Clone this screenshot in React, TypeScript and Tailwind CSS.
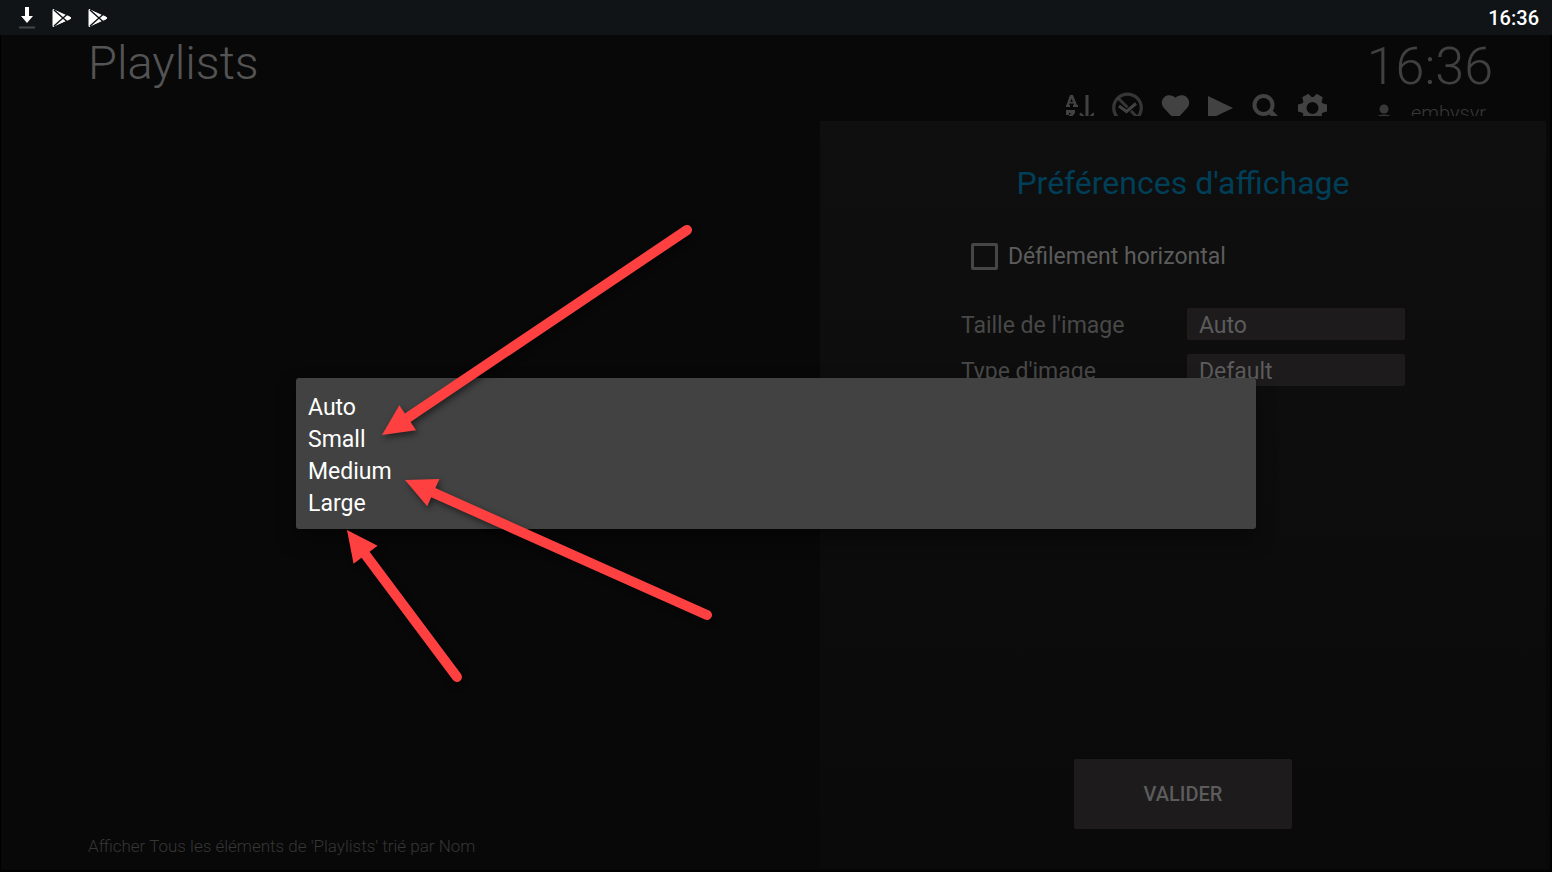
/**
 * App — Playlists screen of the media client with the display preferences
 * panel open and the image size picker on top of it.
 */

import { useState } from 'react'
import type { ReactNode } from 'react'

// ── Data ─────────────────────────────────────────────────────────────────────

const IMAGE_SIZES = ['Auto', 'Small', 'Medium', 'Large']
const IMAGE_TYPES = ['Default', 'Primary', 'Banner', 'Thumb']

// Arrows are drawn in the picker's own coordinates, tip first
const ARROWS = [
  { tip: [86, 57], tail: [391, -148] },
  { tip: [109, 102], tail: [411, 237] },
  { tip: [51, 152], tail: [161, 299] },
]

// ── Icons ────────────────────────────────────────────────────────────────────

function DownloadIcon() {
  return (
    <svg width="18" height="24" viewBox="0 0 18 24" aria-hidden="true">
      <path d="M7 1h4v9h4l-6 7-6-7h4z" fill="#fff" />
      <path d="M1 20.500h16v2H1z" fill="#43474a" />
    </svg>
  )
}

function PlayStoreIcon() {
  return (
    <svg width="20" height="20" viewBox="0 0 20 20" aria-hidden="true">
      <path d="M1 1.500L13 7q6 2 6 3t-6 3L1 18.500z" fill="#fff" stroke="#fff" strokeWidth="1" strokeLinejoin="round" />
      <path d="M2 2l13.500 12M2 18L15.500 6" stroke="#101417" strokeWidth="1.5" fill="none" />
    </svg>
  )
}

function SortIcon() {
  return (
    <svg width="28" height="30" viewBox="0 0 28 30" fill="currentColor" aria-hidden="true">
      <path d="M4 2h3l4 10h1v2H7v-2h1l-.5-1.500H3.500L3 12h1v2H0v-2h.500zM5.500 5.500L4.300 9h2.600z" />
      <path d="M0 17h9v3l-5 6h5v3H0v-3l5-6H3v2H0z" />
      <path d="M19.500 2h3v23h-3z" />
      <path d="M14 20.500l7 6.500 7-6.500" fill="none" stroke="currentColor" strokeWidth="2.500" />
    </svg>
  )
}

function UnwatchedIcon() {
  return (
    <svg width="31" height="32" viewBox="0 0 31 32" fill="none" stroke="currentColor" aria-hidden="true">
      <circle cx="15.500" cy="16" r="13.800" strokeWidth="3.200" opacity="0.8" />
      <path d="M6 6l20 20" strokeWidth="3" opacity="0.8" />
      <path d="M8 14.500l6.500 5L23 12" stroke="#080808" strokeWidth="5" />
      <path d="M7 14l7.500 5.500 9.500-8" strokeWidth="3" />
    </svg>
  )
}

function HeartIcon() {
  return (
    <svg width="29" height="30" viewBox="0 0 30 30" fill="currentColor" aria-hidden="true">
      <path d="M15 4.500C12.500 1.500 6.500.800 3.300 3.800.2 6.800 0 11.500 3 15l12 13 12-13c3-3.500 2.800-8.200-.3-11.200C23.500.800 17.500 1.500 15 4.500z" />
    </svg>
  )
}

function PlayIcon() {
  return (
    <svg width="25" height="26" viewBox="0 0 25 26" fill="currentColor" aria-hidden="true">
      <path d="M0 1l25 12L0 25z" />
    </svg>
  )
}

function SearchIcon() {
  return (
    <svg width="28" height="30" viewBox="-1 -1 28 30" fill="none" stroke="currentColor" aria-hidden="true">
      <circle cx="11.500" cy="11" r="9" strokeWidth="4" />
      <path d="M17 16.500l8.500 8.500" strokeWidth="5" />
    </svg>
  )
}

const GEAR_ANGLES = [0, 60, 120, 180, 240, 300]

function GearIcon() {
  return (
    <svg width="31" height="30" viewBox="-15.500 -15 31 30" fill="currentColor" aria-hidden="true">
      <circle r="8.500" fill="none" stroke="currentColor" strokeWidth="5" />
      {GEAR_ANGLES.map((angle) => (
        <path key={angle} d="M9-5l5.500 1.500v7L9 5z" transform={`rotate(${angle})`} />
      ))}
    </svg>
  )
}

function UserIcon() {
  return (
    <svg width="16" height="18" viewBox="0 0 16 18" fill="currentColor" aria-hidden="true">
      <circle cx="7" cy="5" r="4.500" />
      <path d="M0 16v-2q0-3.500 7-3.500t7 3.500v2z" />
    </svg>
  )
}

// ── Arrow overlay ────────────────────────────────────────────────────────────

function Arrow({ tip, tail }: { tip: number[]; tail: number[] }) {
  const dx = tail[0] - tip[0]
  const dy = tail[1] - tip[1]
  const length = Math.hypot(dx, dy)
  const angle = (Math.atan2(dy, dx) * 180) / Math.PI

  return (
    <g transform={`translate(${tip[0]} ${tip[1]}) rotate(${angle})`}>
      <path d="M0 0L31-15V15z" />
      <path d={`M26 0H${length}`} stroke="#ff4040" strokeWidth="10" strokeLinecap="round" />
    </g>
  )
}

// ── Toolbar ──────────────────────────────────────────────────────────────────

const TOOLS: { label: string; icon: ReactNode }[] = [
  { label: 'Trier', icon: <SortIcon /> },
  { label: 'Non vus', icon: <UnwatchedIcon /> },
  { label: 'Favoris', icon: <HeartIcon /> },
  { label: 'Lecture', icon: <PlayIcon /> },
  { label: 'Rechercher', icon: <SearchIcon /> },
  { label: 'Paramètres', icon: <GearIcon /> },
]

function Header() {
  return (
    <header className="flex h-[81px] items-start overflow-hidden pr-[57px] pl-[87px]">
      <h1 className="flex-1 text-[47px] leading-14 font-light text-[#545454]">Playlists</h1>
      <nav className="mt-[57px] mr-[39px] flex items-center gap-[18px] text-[#424242]">
        {TOOLS.map((tool) => (
          <button key={tool.label} type="button" aria-label={tool.label}>
            {tool.icon}
          </button>
        ))}
      </nav>
      <div className="flex flex-col items-end">
        <span className="text-[52px] leading-[64px] font-light text-[#404040]">16:36</span>
        <span className="flex items-center gap-[18px] pr-[7px] text-[20px] leading-7 font-light text-[#383838]">
          <UserIcon />
          embysvr
        </span>
      </div>
    </header>
  )
}

// ── Preferences panel ────────────────────────────────────────────────────────

interface SelectRowProps {
  id: string
  label: string
  options: string[]
  value: string
  onChange: (value: string) => void
}

function SelectRow({ id, label, options, value, onChange }: SelectRowProps) {
  return (
    <div className="flex items-center justify-between">
      <label htmlFor={id} className="pt-1 text-[#484848]">{label}</label>
      <select
        id={id}
        value={value}
        onChange={(e) => onChange(e.target.value)}
        className="h-8 w-[218px] appearance-none rounded-xs bg-[#1d1b1c] px-3 pt-1 leading-7 text-[#5c5c5c]"
      >
        {options.map((option) => (
          <option key={option}>{option}</option>
        ))}
      </select>
    </div>
  )
}

interface PreferencesProps {
  size: string
  onSizeChange: (size: string) => void
}

function Preferences({ size, onSizeChange }: PreferencesProps) {
  const [horizontal, setHorizontal] = useState(false)
  const [type, setType] = useState('Default')

  return (
    <aside className="flex w-[47%] flex-col items-center bg-linear-to-b from-[#0f0f0f] to-[#0a0a0a] pt-10 pb-[39px]">
      <h2 className="text-[32px] leading-11 text-[#003f58]">Préférences d'affichage</h2>
      <form className="mt-9 flex w-[444px] flex-1 flex-col text-[23px] leading-7" onSubmit={(e) => e.preventDefault()}>
        <label className="mb-[37px] flex items-center gap-[10px] pl-[10px] text-[#5c5c5c]">
          <input
            type="checkbox"
            checked={horizontal}
            onChange={(e) => setHorizontal(e.target.checked)}
            className="size-[27px] appearance-none rounded-xs border-3 border-[#464646] checked:bg-[#464646]"
          />
          <span className="pt-[2px]">Défilement horizontal</span>
        </label>
        <div className="flex flex-col gap-[14px]">
          <SelectRow id="image-size" label="Taille de l'image" options={IMAGE_SIZES} value={size} onChange={onSizeChange} />
          <SelectRow id="image-type" label="Type d'image" options={IMAGE_TYPES} value={type} onChange={setType} />
        </div>
        <button
          type="submit"
          className="mx-auto mt-auto h-[70px] w-[218px] rounded-xs bg-[#1d1b1c] text-[20px] font-medium text-[#5c5c5c]"
        >
          VALIDER
        </button>
      </form>
    </aside>
  )
}

// ── Size picker ──────────────────────────────────────────────────────────────

function SizePicker({ onSelect }: { onSelect: (size: string) => void }) {
  return (
    <div className="absolute inset-0 flex items-center justify-center">
      <div role="dialog" aria-label="Taille de l'image" className="relative w-[960px] max-w-full rounded-[3px] bg-[#424242] pt-[14px] pb-[9px] shadow-[0_10px_20px_rgba(0,0,0,0.4)]">
        <ul className="text-[23px] leading-8 text-white">
          {IMAGE_SIZES.map((size) => (
            <li key={size}>
              <button type="button" className="block w-full px-3 text-left" onClick={() => onSelect(size)}>
                {size}
              </button>
            </li>
          ))}
        </ul>
        <svg
          className="pointer-events-none absolute top-0 left-0 overflow-visible drop-shadow-[2px_3px_3px_rgba(0,0,0,0.5)]"
          width="420"
          height="151"
          fill="#ff4040"
          aria-hidden="true"
        >
          {ARROWS.map((arrow) => (
            <Arrow key={arrow.tip.join()} tip={arrow.tip} tail={arrow.tail} />
          ))}
        </svg>
      </div>
    </div>
  )
}

// ── Page ─────────────────────────────────────────────────────────────────────

export default function App() {
  const [size, setSize] = useState('Auto')

  return (
    <div className="flex min-h-screen flex-col bg-black font-[Roboto,sans-serif]">
      <div className="flex h-[35px] items-center bg-[#101417] pr-[13px] pl-[18px]">
        <div className="flex flex-1 items-center gap-4">
          <DownloadIcon />
          <PlayStoreIcon />
          <PlayStoreIcon />
        </div>
        <span className="text-[20px] font-medium text-white">16:36</span>
      </div>
      <div className="relative flex flex-1 flex-col">
        <div className="mr-[2px] mb-[2px] ml-px flex flex-1 flex-col bg-[#080808] pb-[2px]">
          <Header />
          <main className="mt-[5px] mr-1 flex flex-1">
            <div className="flex flex-1 items-end pb-2 pl-[87px]">
              <p className="text-[17px] leading-7 font-light text-[#363636]">
                Afficher Tous les éléments de 'Playlists' trié par Nom
              </p>
            </div>
            <Preferences size={size} onSizeChange={setSize} />
          </main>
        </div>
        <SizePicker onSelect={setSize} />
      </div>
    </div>
  )
}
